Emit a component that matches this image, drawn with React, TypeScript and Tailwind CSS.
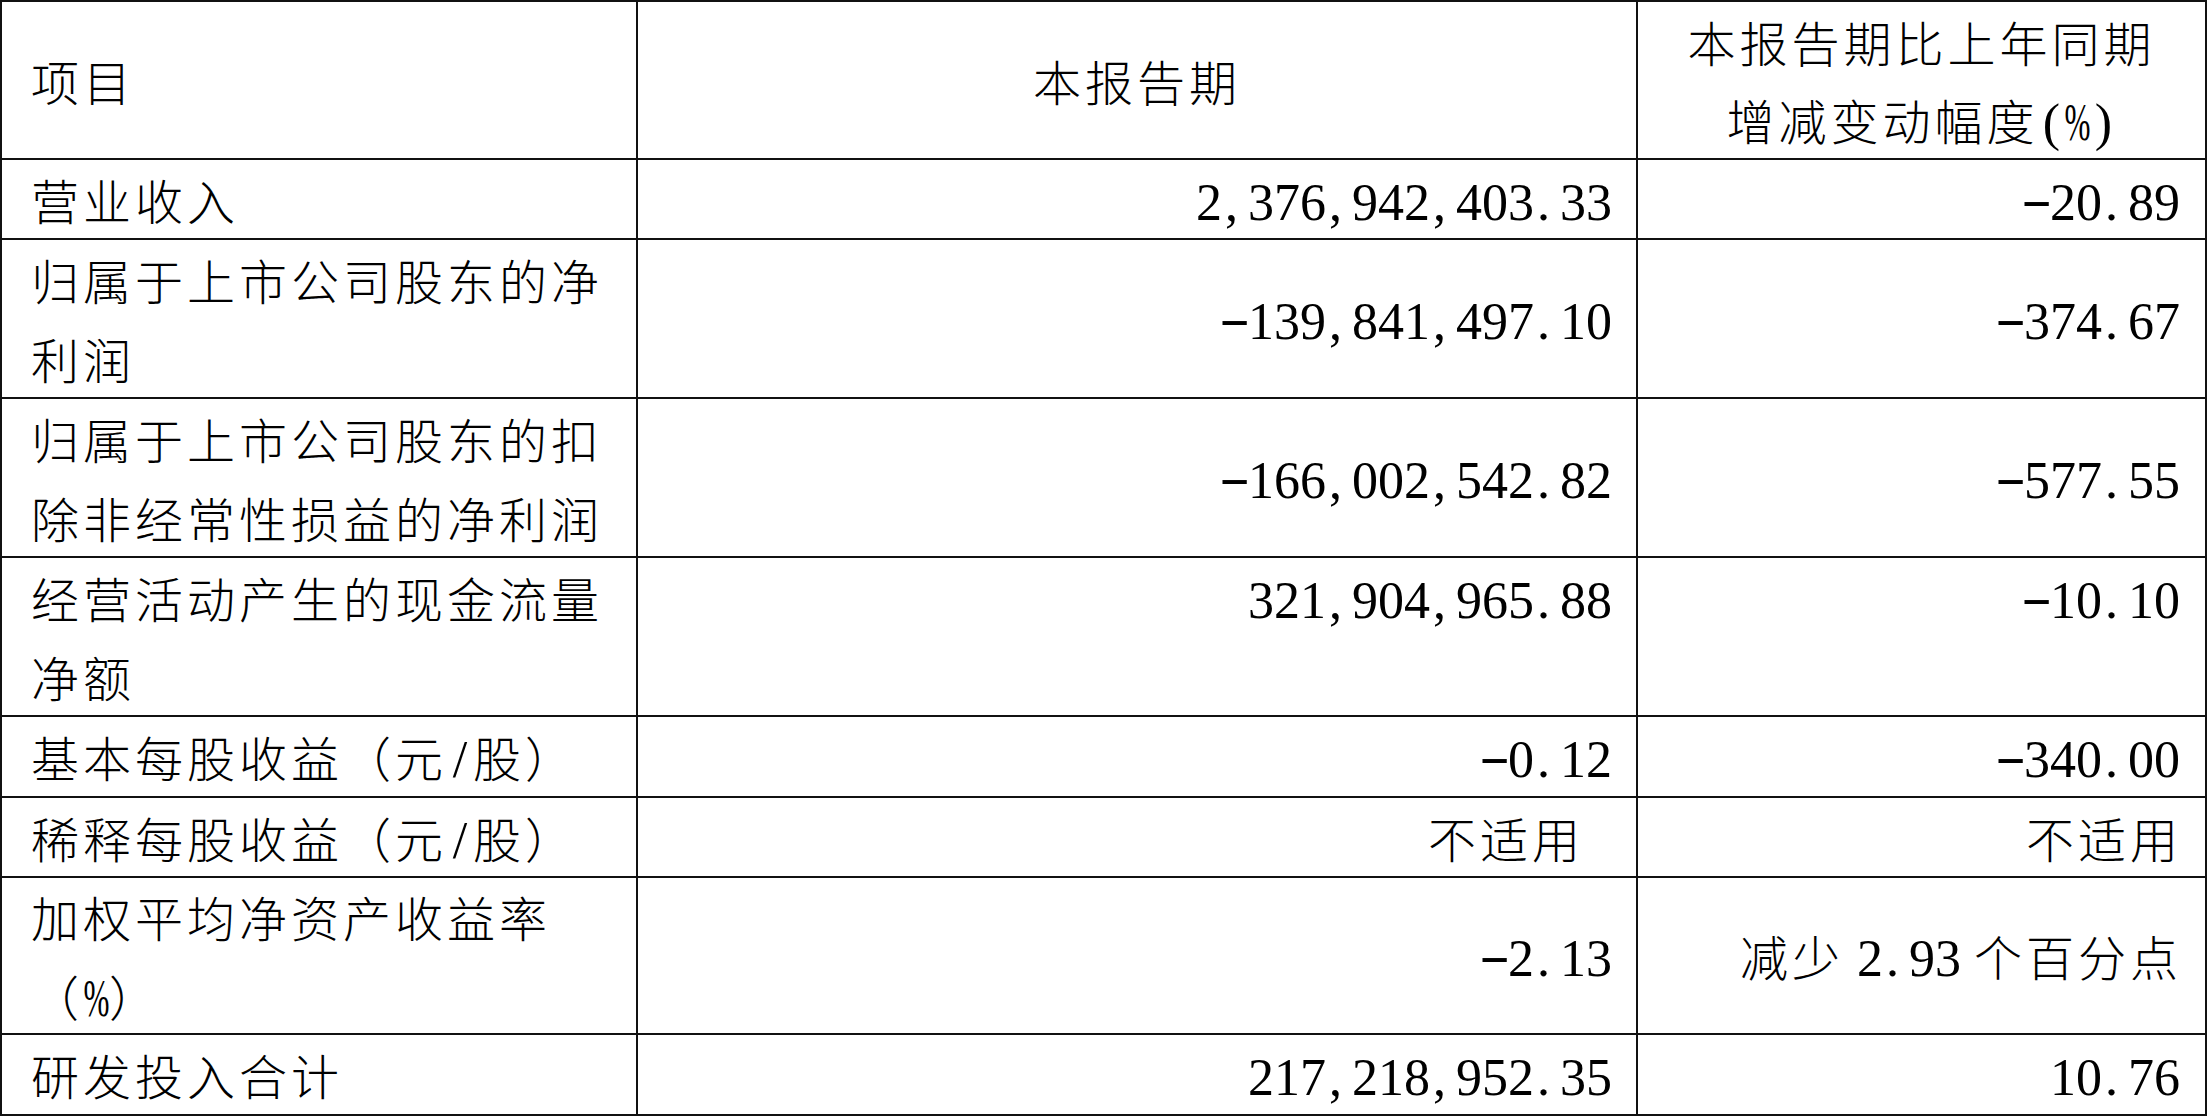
import React from "react";

const HW = /[0-9.,%()\/\-]/;

function HalfChar({ ch }: { ch: string }) {
  if (ch === "," || ch === ".") {
    return (
      <span className="inline-block w-[26px] text-left pl-[3px] leading-none text-[52px] font-['Liberation_Serif',serif]">
        {ch}
      </span>
    );
  }
  if (ch === "-") {
    return (
      <span className="inline-block w-[26px] text-center leading-none text-[52px] font-['Liberation_Serif',serif]">
        <span className="inline-block scale-x-180 -translate-y-[3px]">-</span>
      </span>
    );
  }
  if (ch === "%") {
    return (
      <span className="inline-block w-[26px] text-center leading-none text-[52px] font-['Liberation_Serif',serif]">
        <span className="inline-block w-[43px] -mx-[8.5px] scale-x-60">%</span>
      </span>
    );
  }
  return (
    <span className="inline-block w-[26px] text-center leading-none text-[52px] font-['Liberation_Serif',serif]">
      {ch}
    </span>
  );
}

function Txt({ s }: { s: string }) {
  const parts: React.ReactNode[] = [];
  let buf = "";
  const flush = () => {
    if (buf) {
      parts.push(
        <span key={parts.length} className="tracking-[4px]">
          {buf}
        </span>
      );
      buf = "";
    }
  };
  for (const ch of s) {
    if (ch === " ") {
      flush();
      parts.push(
        <span key={parts.length} className="inline-block w-[13px]">
          {" "}
        </span>
      );
    } else if (HW.test(ch)) {
      flush();
      parts.push(<HalfChar key={parts.length} ch={ch} />);
    } else {
      buf += ch;
    }
  }
  flush();
  return <>{parts}</>;
}

function Label({ lines }: { lines: string[] }) {
  return (
    <div className="bg-white pl-[29px] flex flex-col justify-center whitespace-nowrap">
      {lines.map((l, i) => (
        <div key={i}>
          <Txt s={l} />
        </div>
      ))}
    </div>
  );
}

function ValueCol2({ v, top, cjk }: { v: string; top?: boolean; cjk?: boolean }) {
  return (
    <div
      className={
        "bg-white flex justify-end whitespace-nowrap " +
        (top ? "items-start " : "items-center ") +
        (cjk ? "pr-[52px]" : "pr-[24px]")
      }
    >
      <div>
        <Txt s={v} />
      </div>
    </div>
  );
}

function ValueCol3({ v, top, cjk }: { v: string; top?: boolean; cjk?: boolean }) {
  return (
    <div
      className={
        "bg-white flex justify-end whitespace-nowrap " +
        (top ? "items-start " : "items-center ") +
        (cjk ? "pr-[23px]" : "pr-[25px]")
      }
    >
      <div>
        <Txt s={v} />
      </div>
    </div>
  );
}

export default function App() {
  return (
    <div className="w-[2207px] h-[1116px] bg-white text-black font-['Noto_Sans_CJK_SC',sans-serif] font-light text-[48px] leading-[78.5px]">
      <div className="grid grid-cols-[634px_998px_567px] grid-rows-[156px_78px_157px_157px_157px_79px_78px_155px_79px] gap-[2px] p-[2px] bg-[#111111] w-[2207px] h-[1116px]">
        {/* Header */}
        <Label lines={["项目"]} />
        <div className="bg-white flex items-center justify-center whitespace-nowrap">
          <div>
            <Txt s="本报告期" />
          </div>
        </div>
        <div className="bg-white flex flex-col items-center justify-center whitespace-nowrap">
          <div>
            <Txt s="本报告期比上年同期" />
          </div>
          <div>
            <Txt s="增减变动幅度(%)" />
          </div>
        </div>

        {/* Row 1 */}
        <Label lines={["营业收入"]} />
        <ValueCol2 v="2,376,942,403.33" />
        <ValueCol3 v="-20.89" />

        {/* Row 2 */}
        <Label lines={["归属于上市公司股东的净", "利润"]} />
        <ValueCol2 v="-139,841,497.10" />
        <ValueCol3 v="-374.67" />

        {/* Row 3 */}
        <Label lines={["归属于上市公司股东的扣", "除非经常性损益的净利润"]} />
        <ValueCol2 v="-166,002,542.82" />
        <ValueCol3 v="-577.55" />

        {/* Row 4 */}
        <Label lines={["经营活动产生的现金流量", "净额"]} />
        <ValueCol2 v="321,904,965.88" top />
        <ValueCol3 v="-10.10" top />

        {/* Row 5 */}
        <Label lines={["基本每股收益（元/股）"]} />
        <ValueCol2 v="-0.12" />
        <ValueCol3 v="-340.00" />

        {/* Row 6 */}
        <Label lines={["稀释每股收益（元/股）"]} />
        <ValueCol2 v="不适用" cjk />
        <ValueCol3 v="不适用" cjk />

        {/* Row 7 */}
        <Label lines={["加权平均净资产收益率", "（%）"]} />
        <ValueCol2 v="-2.13" />
        <ValueCol3 v="减少 2.93 个百分点" cjk />

        {/* Row 8 */}
        <Label lines={["研发投入合计"]} />
        <ValueCol2 v="217,218,952.35" />
        <ValueCol3 v="10.76" />
      </div>
    </div>
  );
}
